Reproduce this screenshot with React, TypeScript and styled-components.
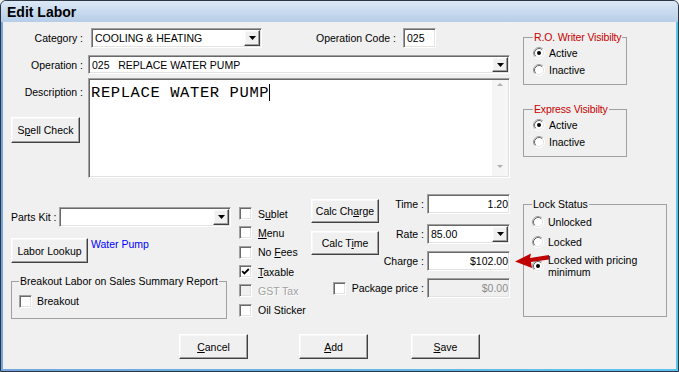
import React, { ReactNode } from 'react';
import styled, { createGlobalStyle, css } from 'styled-components';

const GlobalStyle = createGlobalStyle`
  * { box-sizing: border-box; }
  html, body { margin: 0; padding: 0; background: #f0f0f0; }
  body {
    font-family: 'Liberation Sans', Arial, sans-serif;
    font-size: 10.5px;
    color: #000;
  }
  u { text-underline-offset: 1px; }
`;

const sunken = css`
  border: 1px solid;
  border-color: #a0a0a0 #ffffff #ffffff #a0a0a0;
  box-shadow: inset 1px 1px 0 #696969, inset -1px -1px 0 #e3e3e3;
`;

const raised = css`
  border: 1px solid;
  border-color: #ffffff #404040 #404040 #ffffff;
  box-shadow: inset -1px -1px 0 #a0a0a0, inset 1px 1px 0 #f8f8f8;
  background: #f0f0f0;
`;

const Window = styled.div`
  width: 679px;
  height: 372px;
  display: flex;
  flex-direction: column;
  border: 1px solid #2a3644;
  border-radius: 6px 6px 0 0;
  background: linear-gradient(to right, #74a6dc, #5cc3ee);
  overflow: hidden;
`;

const TitleBar = styled.div`
  height: 21px;
  flex-shrink: 0;
  padding: 1px 0 0 6px;
  background: linear-gradient(#dce8f5, #b6cde8);
  font-size: 14px;
  font-weight: bold;
  line-height: 20px;
`;

const Client = styled.div`
  position: relative;
  flex: 1;
  margin: 0 2px 2px;
  background: #f0f0f0;
  display: flex;
  flex-direction: column;
`;

const Content = styled.div`
  display: flex;
  height: 312px;
  flex-shrink: 0;
`;

const Main = styled.div`
  width: 520px;
  display: flex;
  flex-direction: column;
`;

const Side = styled.div`
  display: flex;
  flex-direction: column;
  padding-top: 9px;
`;

const FormRow = styled.div<{ $mt: number; $h: number }>`
  display: flex;
  align-items: center;
  margin-top: ${(p) => p.$mt}px;
  height: ${(p) => p.$h}px;
  flex-shrink: 0;
`;

const RowLabel = styled.span<{ $ml?: number }>`
  white-space: nowrap;
  margin-left: ${(p) => p.$ml ?? 0}px;
`;

const LeftLabel = styled.span`
  width: 80px;
  text-align: right;
  white-space: nowrap;
  flex-shrink: 0;
`;

const ComboBox = styled.div<{ $w: number; $h: number; $ml?: number }>`
  ${sunken};
  display: flex;
  width: ${(p) => p.$w}px;
  height: ${(p) => p.$h}px;
  margin-left: ${(p) => p.$ml ?? 0}px;
  padding: 1px;
  background: #fff;
  flex-shrink: 0;
`;

const ComboText = styled.span`
  flex: 1;
  display: flex;
  align-items: center;
  padding-left: 2px;
  white-space: pre;
  overflow: hidden;
`;

const DropButton = styled.span`
  ${raised};
  width: 16px;
  display: flex;
  align-items: center;
  justify-content: center;
  flex-shrink: 0;
`;

const TextField = styled.div<{ $w: number; $h: number; $ml?: number; $disabled?: boolean; $right?: boolean }>`
  ${sunken};
  width: ${(p) => p.$w}px;
  height: ${(p) => p.$h}px;
  margin-left: ${(p) => p.$ml ?? 0}px;
  display: flex;
  align-items: center;
  justify-content: ${(p) => (p.$right ? 'flex-end' : 'flex-start')};
  padding: ${(p) => (p.$right ? '0 1px 0 2px' : '0 2px 0 3px')};
  background: ${(p) => (p.$disabled ? '#f0f0f0' : '#fff')};
  color: ${(p) => (p.$disabled ? '#8d8d8d' : '#000')};
  flex-shrink: 0;
`;

const Button = styled.button<{ $w: number; $h: number; $mt?: number; $ml?: number }>`
  ${raised};
  width: ${(p) => p.$w}px;
  height: ${(p) => p.$h}px;
  margin: ${(p) => p.$mt ?? 0}px 0 0 ${(p) => p.$ml ?? 0}px;
  padding: 0;
  font: inherit;
  color: #000;
  flex-shrink: 0;
`;

const DescRow = styled.div`
  display: flex;
  margin-top: 4px;
  height: 100px;
  flex-shrink: 0;
`;

const DescSide = styled.div`
  width: 85px;
  display: flex;
  flex-direction: column;
  flex-shrink: 0;
`;

const DescLabel = styled.span`
  width: 80px;
  text-align: right;
  line-height: 13px;
  margin-top: 7.5px;
`;

const Memo = styled.div`
  ${sunken};
  width: 422px;
  height: 100px;
  padding: 1px;
  background: #fff;
  display: flex;
`;

const MemoText = styled.div`
  flex: 1;
  padding: 4px 0 0 1px;
  font-family: 'Liberation Mono', 'Courier New', monospace;
  font-size: 15.5px;
  letter-spacing: 0.6px;
  line-height: 17px;
  white-space: pre;
  color: #000;
`;

const Caret = styled.span`
  display: inline-block;
  width: 1px;
  height: 17px;
  margin-left: -0.6px;
  background: #000;
  vertical-align: -4px;
`;

const ScrollTrack = styled.div`
  width: 16px;
  background: #f5f5f5;
  display: flex;
  flex-direction: column;
  justify-content: space-between;
  align-items: center;
  padding: 3px 0 8px;
`;

const ScrollArrow = styled.span<{ $down?: boolean }>`
  width: 0;
  height: 0;
  border-left: 3.5px solid transparent;
  border-right: 3.5px solid transparent;
  ${(p) => (p.$down ? 'border-top: 3.5px solid #b0b0b0;' : 'border-bottom: 3.5px solid #b0b0b0;')}
`;

const Lower = styled.div`
  display: flex;
  align-items: flex-start;
  margin-top: 16px;
`;

const KitColumn = styled.div`
  width: 220px;
  margin-left: 8px;
  display: flex;
  flex-direction: column;
`;

const KitRow = styled.div`
  display: flex;
  align-items: center;
  justify-content: space-between;
  margin-top: 13px;
  height: 20px;
`;

const LookupRow = styled.div`
  display: flex;
  align-items: flex-start;
  gap: 3px;
  margin-top: 11px;
`;

const LinkText = styled.span`
  color: #0000ff;
  line-height: 13px;
`;

const CheckColumn = styled.div`
  width: 72px;
  margin: 10px 0 0 8px;
  display: flex;
  flex-direction: column;
`;

const CheckRow = styled.label<{ $disabled?: boolean; $gap?: number }>`
  display: flex;
  align-items: center;
  gap: ${(p) => p.$gap ?? 6}px;
  height: 19.3px;
  white-space: nowrap;
  color: ${(p) => (p.$disabled ? '#a0a0a0' : '#000')};
  text-shadow: ${(p) => (p.$disabled ? '1px 1px 0 #fff' : 'none')};
`;

const CheckBoxBox = styled.span<{ $disabled?: boolean }>`
  ${sunken};
  width: 13px;
  height: 13px;
  display: flex;
  align-items: center;
  justify-content: center;
  background: ${(p) => (p.$disabled ? '#f0f0f0' : '#fff')};
  flex-shrink: 0;
`;

const PriceColumn = styled.div`
  width: 199px;
  display: flex;
  flex-direction: column;
`;

const PriceTop = styled.div`
  display: flex;
  justify-content: space-between;
`;

const CalcButtons = styled.div`
  display: flex;
  flex-direction: column;
  gap: 8px;
  margin-top: 5px;
`;

const PriceFields = styled.div`
  display: flex;
  flex-direction: column;
  align-items: flex-end;
`;

const PriceRow = styled.div<{ $mt: number }>`
  display: flex;
  align-items: center;
  justify-content: flex-end;
  gap: 3px;
  height: 20px;
  margin-top: ${(p) => p.$mt}px;
`;

const PackageCheck = styled.span`
  display: flex;
  margin-right: 3px;
`;

const Group = styled.fieldset<{ $w: number; $h: number; $mt?: number; $pl?: number }>`
  margin: ${(p) => p.$mt ?? 0}px 0 0;
  padding: 0 3px 0 ${(p) => p.$pl ?? 9}px;
  width: ${(p) => p.$w}px;
  height: ${(p) => p.$h}px;
  border: 1px solid #a0a0a0;
  min-width: 0;
  flex-shrink: 0;
`;

const GroupTitle = styled.legend<{ $red?: boolean }>`
  padding: 0 1px;
  line-height: 13px;
  white-space: nowrap;
  letter-spacing: ${(p) => (p.$red ? '-0.15px' : '0')};
  color: ${(p) => (p.$red ? '#c80000' : '#000')};
`;

const GroupBody = styled.div<{ $pt: number }>`
  padding-top: ${(p) => p.$pt}px;
  display: flex;
  flex-direction: column;
`;

const RadioRow = styled.div<{ $h: number }>`
  display: flex;
  align-items: center;
  gap: 4px;
  height: ${(p) => p.$h}px;
`;

const TwoLine = styled.span`
  line-height: 12.5px;
`;

const ButtonBar = styled.div`
  display: flex;
  height: 25px;
`;

const ArrowMark = styled.svg`
  position: absolute;
  left: 508px;
  top: 229px;
`;

function Radio({ checked }: { checked?: boolean }) {
  return (
    <svg width="12" height="12" viewBox="0 0 12 12" style={{ flexShrink: 0 }}>
      <circle cx="6" cy="6" r="5" fill="#fff" />
      <path d="M2.11 9.89 A5.5 5.5 0 0 1 9.89 2.11" stroke="#a0a0a0" fill="none" />
      <path d="M9.89 2.11 A5.5 5.5 0 0 1 2.11 9.89" stroke="#ffffff" fill="none" />
      <path d="M2.82 9.18 A4.5 4.5 0 0 1 9.18 2.82" stroke="#696969" fill="none" />
      <path d="M9.18 2.82 A4.5 4.5 0 0 1 2.82 9.18" stroke="#e3e3e3" fill="none" />
      {checked && <circle cx="6" cy="6" r="2" fill="#000" />}
    </svg>
  );
}

function CheckBox({ checked, disabled }: { checked?: boolean; disabled?: boolean }) {
  return (
    <CheckBoxBox $disabled={disabled}>
      {checked && (
        <svg width="9" height="9" viewBox="0 0 9 9">
          <path d="M1.2 4.2 L3.4 6.4 L7.8 2" stroke="#000" strokeWidth="1.8" fill="none" />
        </svg>
      )}
    </CheckBoxBox>
  );
}

function Combo({ w, h, ml, value }: { w: number; h: number; ml?: number; value?: string }) {
  return (
    <ComboBox $w={w} $h={h} $ml={ml}>
      <ComboText>{value}</ComboText>
      <DropButton>
        <svg width="7" height="4" viewBox="0 0 7 4">
          <path d="M0 0 H7 L3.5 4 Z" fill="#000" />
        </svg>
      </DropButton>
    </ComboBox>
  );
}

const checks: { label: ReactNode; checked?: boolean; disabled?: boolean }[] = [
  { label: <>S<u>u</u>blet</> },
  { label: <><u>M</u>enu</> },
  { label: <>No <u>F</u>ees</> },
  { label: <><u>T</u>axable</>, checked: true },
  { label: <>GST Tax</>, disabled: true },
  { label: <>Oil Sticker</> },
];

function App() {
  return (
    <>
      <GlobalStyle />
      <Window>
        <TitleBar>Edit Labor</TitleBar>
        <Client>
          <Content>
            <Main>
              <FormRow $mt={5} $h={21}>
                <LeftLabel>Category :</LeftLabel>
                <Combo w={171} h={20} ml={8} value="COOLING & HEATING" />
                <RowLabel $ml={54}>Operation Code :</RowLabel>
                <TextField $w={33} $h={20} $ml={7}>
                  025
                </TextField>
              </FormRow>

              <FormRow $mt={7} $h={19}>
                <LeftLabel>Operation :</LeftLabel>
                <Combo w={422} h={19} ml={5} value="025   REPLACE WATER PUMP" />
              </FormRow>

              <DescRow>
                <DescSide>
                  <DescLabel>Description :</DescLabel>
                  <Button $w={69} $h={26} $mt={18.5} $ml={8}>
                    S<u>p</u>ell Check
                  </Button>
                </DescSide>
                <Memo>
                  <MemoText>
                    REPLACE WATER PUMP
                    <Caret />
                  </MemoText>
                  <ScrollTrack>
                    <ScrollArrow />
                    <ScrollArrow $down />
                  </ScrollTrack>
                </Memo>
              </DescRow>

              <Lower>
                <KitColumn>
                  <KitRow>
                    <span>Parts Kit :</span>
                    <Combo w={172} h={20} />
                  </KitRow>
                  <LookupRow>
                    <Button $w={77} $h={25}>
                      Labor Lookup
                    </Button>
                    <LinkText>Water Pump</LinkText>
                  </LookupRow>
                  <Group $w={216} $h={44} $mt={11.5} $pl={7}>
                    <GroupTitle>Breakout Labor on Sales Summary Report</GroupTitle>
                    <GroupBody $pt={4}>
                      <CheckRow $gap={5}>
                        <CheckBox />
                        Breakout
                      </CheckRow>
                    </GroupBody>
                  </Group>
                </KitColumn>

                <CheckColumn>
                  {checks.map((c, i) => (
                    <CheckRow key={i} $disabled={c.disabled}>
                      <CheckBox checked={c.checked} disabled={c.disabled} />
                      <span>{c.label}</span>
                    </CheckRow>
                  ))}
                </CheckColumn>

                <PriceColumn>
                  <PriceTop>
                    <CalcButtons>
                      <Button $w={68} $h={24}>
                        Calc Ch<u>a</u>rge
                      </Button>
                      <Button $w={68} $h={24}>
                        Calc T<u>i</u>me
                      </Button>
                    </CalcButtons>
                    <PriceFields>
                      <PriceRow $mt={0}>
                        <span>Time :</span>
                        <TextField $w={83} $h={20} $right>
                          1.20
                        </TextField>
                      </PriceRow>
                      <PriceRow $mt={10}>
                        <span>Rate :</span>
                        <Combo w={83} h={20} value="85.00" />
                      </PriceRow>
                      <PriceRow $mt={7}>
                        <span>Charge :</span>
                        <TextField $w={83} $h={20} $right>
                          $102.00
                        </TextField>
                      </PriceRow>
                    </PriceFields>
                  </PriceTop>
                  <PriceRow $mt={7}>
                    <PackageCheck>
                      <CheckBox />
                    </PackageCheck>
                    <span>Package price :</span>
                    <TextField $w={83} $h={20} $right $disabled>
                      $0.00
                    </TextField>
                  </PriceRow>
                </PriceColumn>
              </Lower>
            </Main>

            <Side>
              <Group $w={104} $h={54}>
                <GroupTitle $red>R.O. Writer Visibilty</GroupTitle>
                <GroupBody $pt={1}>
                  <RadioRow $h={16.5}>
                    <Radio checked />
                    Active
                  </RadioRow>
                  <RadioRow $h={16.5}>
                    <Radio />
                    Inactive
                  </RadioRow>
                </GroupBody>
              </Group>

              <Group $w={104} $h={54} $mt={18}>
                <GroupTitle $red>Express Visibilty</GroupTitle>
                <GroupBody $pt={1}>
                  <RadioRow $h={16.5}>
                    <Radio checked />
                    Active
                  </RadioRow>
                  <RadioRow $h={16.5}>
                    <Radio />
                    Inactive
                  </RadioRow>
                </GroupBody>
              </Group>

              <Group $w={144} $h={119} $mt={41} $pl={8}>
                <GroupTitle>Lock Status</GroupTitle>
                <GroupBody $pt={1}>
                  <RadioRow $h={20}>
                    <Radio />
                    Unlocked
                  </RadioRow>
                  <RadioRow $h={20}>
                    <Radio />
                    Locked
                  </RadioRow>
                  <RadioRow $h={28}>
                    <Radio checked />
                    <TwoLine>
                      Locked with pricing
                      <br />
                      minimum
                    </TwoLine>
                  </RadioRow>
                </GroupBody>
              </Group>
            </Side>
          </Content>

          <ButtonBar>
            <Button $w={69} $h={25} $ml={176}>
              <u>C</u>ancel
            </Button>
            <Button $w={69} $h={25} $ml={51}>
              <u>A</u>dd
            </Button>
            <Button $w={69} $h={25} $ml={43}>
              <u>S</u>ave
            </Button>
          </ButtonBar>

          <ArrowMark width="42" height="22" viewBox="0 0 42 22">
            <path
              d="M4 10.5 L20 2.5 L19 7 L38 4 L38 8.5 L20 11 L21 17 Z"
              fill="#c00000"
            />
          </ArrowMark>
        </Client>
      </Window>
    </>
  );
}

export default App;
